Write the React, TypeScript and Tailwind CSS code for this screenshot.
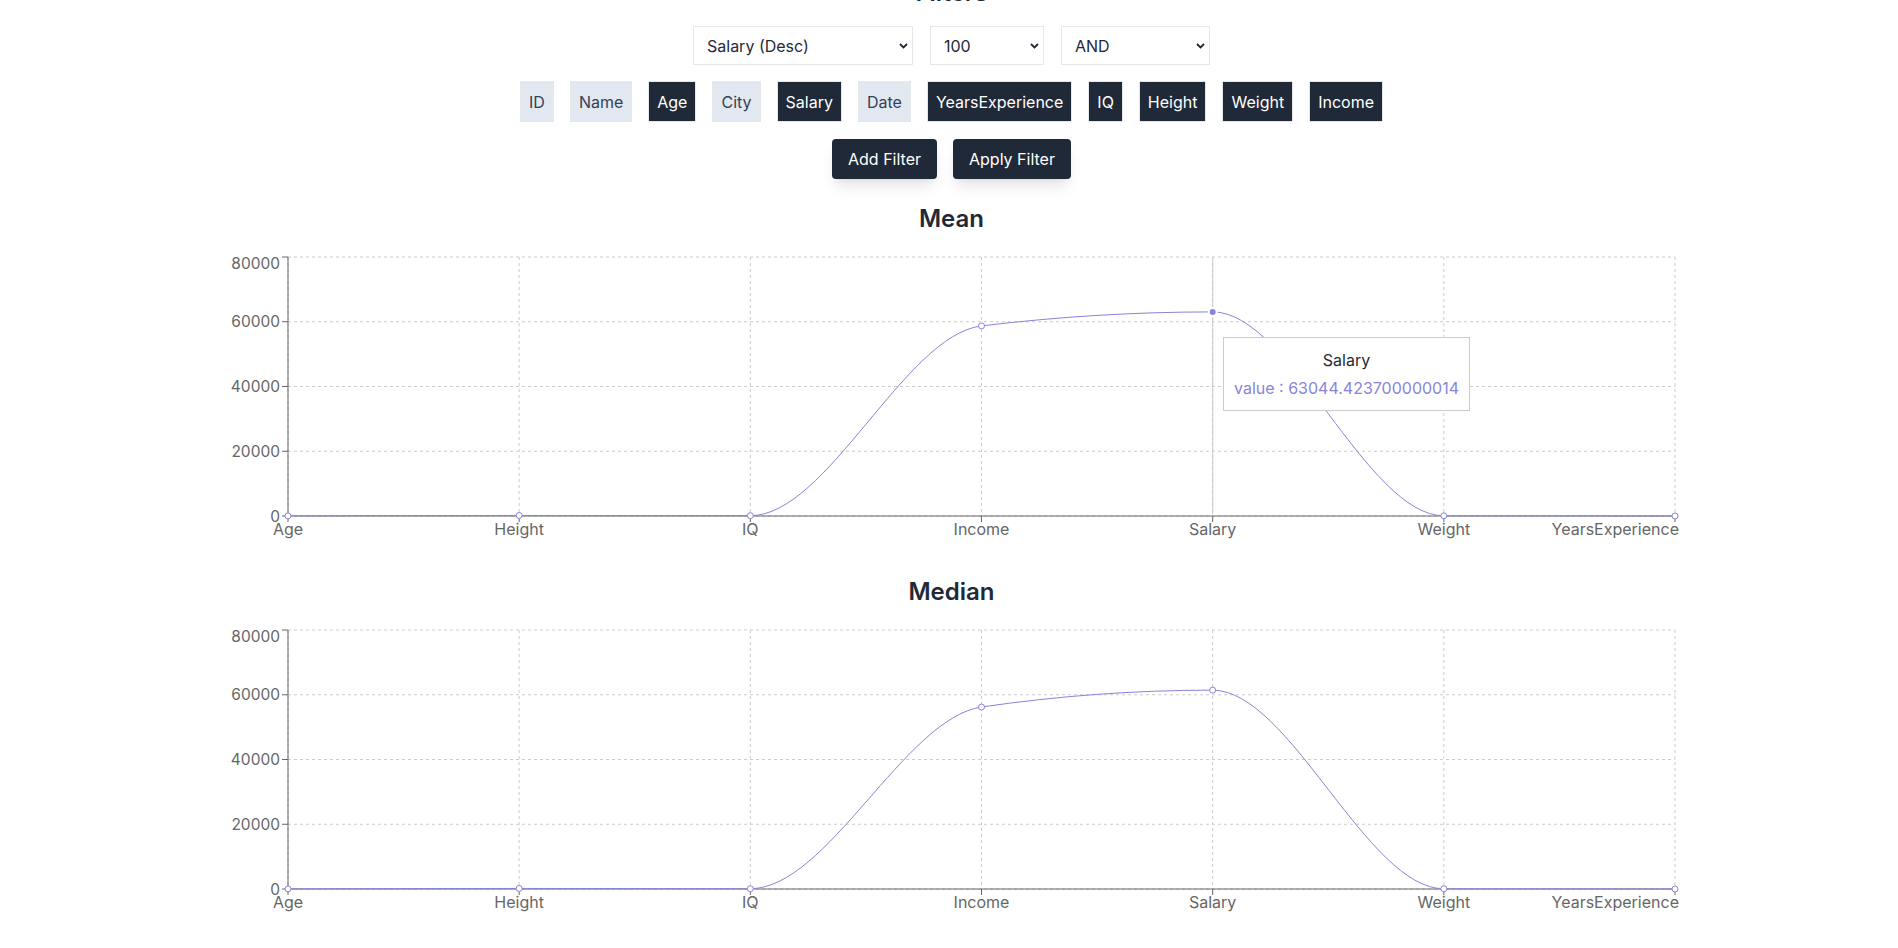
import { useState } from 'react';

type Point = { name: string; value: number };

const KEYS = ['Age', 'Height', 'IQ', 'Income', 'Salary', 'Weight', 'YearsExperience'];

const meanData: Point[] = [
    { name: 'Age', value: 41.2 },
    { name: 'Height', value: 170.4 },
    { name: 'IQ', value: 101.3 },
    { name: 'Income', value: 58712.31 },
    { name: 'Salary', value: 63044.423700000014 },
    { name: 'Weight', value: 72.8 },
    { name: 'YearsExperience', value: 10.6 },
];

const medianData: Point[] = [
    { name: 'Age', value: 40 },
    { name: 'Height', value: 170 },
    { name: 'IQ', value: 100 },
    { name: 'Income', value: 56210 },
    { name: 'Salary', value: 61420 },
    { name: 'Weight', value: 72 },
    { name: 'YearsExperience', value: 10 },
];

const columns = [
    { label: 'ID', on: false },
    { label: 'Name', on: false },
    { label: 'Age', on: true },
    { label: 'City', on: false },
    { label: 'Salary', on: true },
    { label: 'Date', on: false },
    { label: 'YearsExperience', on: true },
    { label: 'IQ', on: true },
    { label: 'Height', on: true },
    { label: 'Weight', on: true },
    { label: 'Income', on: true },
];

// plot box, page coordinates (svg spans the full width)
const LEFT = 288;
const RIGHT = 1675;
const TOP = 22;
const PLOT_H = 259;
const MAX = 80000;

function monotonePath(pts: [number, number][]) {
    const n = pts.length;
    const sign = (x: number) => (x < 0 ? -1 : 1);
    const h = (i: number) => pts[i + 1][0] - pts[i][0];
    const s = (i: number) => (pts[i + 1][1] - pts[i][1]) / h(i);
    const t: number[] = new Array(n).fill(0);
    for (let i = 1; i < n - 1; i++) {
        const h0 = h(i - 1), h1 = h(i), s0 = s(i - 1), s1 = s(i);
        const p = (s0 * h1 + s1 * h0) / (h0 + h1);
        t[i] = (sign(s0) + sign(s1)) * Math.min(Math.abs(s0), Math.abs(s1), 0.5 * Math.abs(p)) || 0;
    }
    t[0] = (3 * s(0) - t[1]) / 2;
    t[n - 1] = (3 * s(n - 2) - t[n - 2]) / 2;
    let d = `M${pts[0][0]},${pts[0][1]}`;
    for (let i = 0; i < n - 1; i++) {
        const [x0, y0] = pts[i];
        const [x1, y1] = pts[i + 1];
        const dx = (x1 - x0) / 3;
        d += `C${x0 + dx},${y0 + dx * t[i]},${x1 - dx},${y1 - dx * t[i + 1]},${x1},${y1}`;
    }
    return d;
}

function Chevron() {
    return (
        <svg className="absolute right-[5px] top-[17px] pointer-events-none" width="9" height="6" viewBox="0 0 9 6">
            <path d="M1 1 L4.5 4.5 L8 1" fill="none" stroke="#1f2937" strokeWidth="1.8" />
        </svg>
    );
}

function Select({ value, options, width }: { value: string; options: string[]; width: string }) {
    const [v, setV] = useState(value);
    return (
        <div className={`relative ${width}`}>
            <select
                value={v}
                onChange={(e) => setV(e.target.value)}
                className="appearance-none w-full h-[39px] border border-[#e5e7eb] bg-white pl-[13px] pr-6 text-base text-[#1f2937] outline-none"
            >
                {options.map((o) => (
                    <option key={o}>{o}</option>
                ))}
            </select>
            <Chevron />
        </div>
    );
}

function Chart({ title, data, tooltip }: { title: string; data: Point[]; tooltip?: string }) {
    const step = (RIGHT - LEFT) / (KEYS.length - 1);
    const yOf = (v: number) => TOP + PLOT_H - (v / MAX) * PLOT_H;
    const pts: [number, number][] = data.map((d, i) => [LEFT + i * step, yOf(d.value)]);
    const bottom = TOP + PLOT_H;
    const ticks = [0, 20000, 40000, 60000, 80000];
    const activeIdx = tooltip ? data.findIndex((d) => d.name === tooltip) : -1;

    return (
        <div className="w-full">
            <h2 className="pl-[5px] h-8 leading-8 text-2xl font-semibold text-[#1f2937] text-center">{title}</h2>
            <div className="relative w-full h-[339px]">
                <svg width="1898" height="339" className="block overflow-visible text-base">
                    {/* grid */}
                    {ticks.map((t) => (
                        <line key={t} x1={LEFT} x2={RIGHT} y1={yOf(t)} y2={yOf(t)} stroke="#ccc" strokeDasharray="3 3" />
                    ))}
                    {KEYS.map((k, i) => (
                        <line key={k} x1={LEFT + i * step} x2={LEFT + i * step} y1={TOP} y2={bottom} stroke="#ccc" strokeDasharray="3 3" />
                    ))}

                    {/* x axis */}
                    <line x1={LEFT} x2={RIGHT} y1={bottom} y2={bottom} stroke="#666" />
                    {KEYS.map((k, i) => {
                        const x = LEFT + i * step;
                        const last = i === KEYS.length - 1;
                        return (
                            <g key={k}>
                                <line x1={x} x2={x} y1={bottom} y2={bottom + 6} stroke="#666" />
                                <text
                                    x={last ? 1679 : x}
                                    y={bottom + 8}
                                    dy="0.71em"
                                    textAnchor={last ? 'end' : 'middle'}
                                    fill="#666"
                                >
                                    {k}
                                </text>
                            </g>
                        );
                    })}

                    {/* y axis */}
                    <line x1={LEFT} x2={LEFT} y1={TOP} y2={bottom} stroke="#666" />
                    {ticks.map((t) => (
                        <g key={t}>
                            <line x1={LEFT - 6} x2={LEFT} y1={yOf(t)} y2={yOf(t)} stroke="#666" />
                            <text
                                x={LEFT - 8}
                                y={t === MAX ? yOf(t) + 6.5 : yOf(t)}
                                dy="0.355em"
                                textAnchor="end"
                                fill="#666"
                                className="text-[15.5px]"
                            >
                                {t}
                            </text>
                        </g>
                    ))}

                    {activeIdx >= 0 && (
                        <line x1={pts[activeIdx][0]} x2={pts[activeIdx][0]} y1={TOP} y2={bottom} stroke="#ccc" />
                    )}

                    <path d={monotonePath(pts)} fill="none" stroke="#8884d8" strokeWidth="1" />
                    {pts.map(([x, y], i) =>
                        i === activeIdx ? (
                            <circle key={i} cx={x} cy={y} r="4" fill="#8884d8" stroke="#fff" strokeWidth="2" />
                        ) : (
                            <circle key={i} cx={x} cy={y} r="3" fill="#fff" stroke="#8884d8" strokeWidth="1" />
                        )
                    )}
                </svg>

                {activeIdx >= 0 && (
                    <div
                        className="absolute left-[1223px] top-[102px] bg-white border border-[#ccc] p-[10px] whitespace-nowrap text-center text-base"
                    >
                        <p className="m-0 leading-6 text-[#1f2937]">{data[activeIdx].name}</p>
                        <p className="pt-1 leading-6 text-[#8884d8]">value : {data[activeIdx].value}</p>
                    </div>
                )}
            </div>
        </div>
    );
}

export default function App() {
    const [active, setActive] = useState(columns);

    const toggle = (label: string) =>
        setActive((prev) => prev.map((c) => (c.label === label ? { ...c, on: !c.on } : c)));

    return (
        <div className="min-h-screen w-[1898px] bg-white overflow-hidden font-[Inter,sans-serif] text-[#1f2937]">
            <div className="-mt-[23px] flex flex-col">
                <h2 className="pl-[5px] h-8 leading-8 text-2xl font-semibold text-center">Filters</h2>

                {/* sort / limit / mode */}
                <div className="mt-[17px] pl-[5px] flex justify-center gap-[17px]">
                    <Select value="Salary (Desc)" options={['Salary (Desc)', 'Salary (Asc)', 'Age (Desc)', 'Age (Asc)']} width="w-[220px]" />
                    <Select value="100" options={['10', '50', '100', '500']} width="w-[114px]" />
                    <Select value="AND" options={['AND', 'OR']} width="w-[149px]" />
                </div>

                {/* column chips */}
                <div className="mt-4 pl-[5px] flex justify-center gap-4">
                    {active.map((c) => (
                        <button
                            key={c.label}
                            onClick={() => toggle(c.label)}
                            className={
                                c.on
                                    ? 'h-[41px] px-2 border border-[#e5e7eb] bg-[#1f2937] text-white text-base'
                                    : 'h-[41px] px-2 border border-[#e5e7eb] bg-[#e2e8f0] text-[#334155] text-base'
                            }
                        >
                            {c.label}
                        </button>
                    ))}
                </div>

                <div className="mt-[17px] pl-[5px] flex justify-center gap-4">
                    <button className="h-10 px-4 rounded bg-[#1f2937] text-white text-base shadow-lg">
                        Add Filter
                    </button>
                    <button className="h-10 px-4 rounded bg-[#1f2937] text-white text-base shadow-lg">
                        Apply Filter
                    </button>
                </div>

                <div className="mt-6">
                    <Chart title="Mean" data={meanData} tooltip="Salary" />
                </div>
                <div className="mt-[2px]">
                    <Chart title="Median" data={medianData} />
                </div>
            </div>
        </div>
    );
}
